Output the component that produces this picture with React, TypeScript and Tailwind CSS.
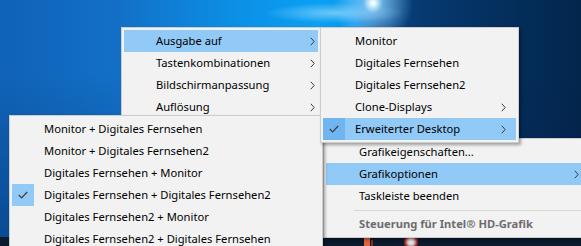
import React from "react";

type Item = {
  label: string;
  sub?: boolean;
  checked?: boolean;
  active?: boolean;
};

const font = "font-['Segoe_UI','Noto_Sans',sans-serif] text-[11.2px]";

function Chevron() {
  return (
    <svg width="5" height="9" viewBox="0 0 5 9" className="shrink-0">
      <path d="M0.8 0.8 L4.2 4.5 L0.8 8.2" fill="none" stroke="#3a3a3a" strokeWidth="1" />
    </svg>
  );
}

function Check() {
  return (
    <svg width="10" height="8" viewBox="0 0 10 8">
      <path d="M0.8 4 L3.6 6.8 L9.2 1" fill="none" stroke="#3c3c3c" strokeWidth="1.2" />
    </svg>
  );
}

function Row({ item, chevronPad }: { item: Item; chevronPad: string }) {
  return (
    <div
      className={`flex h-[22px] items-center ${item.active ? "bg-[#91c9f7]" : ""}`}
    >
      <div
        className={`flex h-[22px] w-[22px] shrink-0 items-center justify-center ${
          item.checked ? (item.active ? "bg-[#6fb6f1]" : "bg-[#91c9f7]") : ""
        }`}
      >
        {item.checked && <Check />}
      </div>
      <span className="ml-[10px] flex-1 whitespace-nowrap leading-none text-black">
        {item.label}
      </span>
      {item.sub && (
        <span className={`flex ${chevronPad}`}>
          <Chevron />
        </span>
      )}
    </div>
  );
}

const menuBox =
  "absolute border border-[#cccccc] bg-[#f2f2f2] p-[2px] shadow-[2px_2px_3px_rgba(0,0,0,0.35)]";

const menu1: Item[] = [
  { label: "Ausgabe auf", sub: true, active: true },
  { label: "Tastenkombinationen", sub: true },
  { label: "Bildschirmanpassung", sub: true },
  { label: "Auflösung", sub: true },
];

const menu2: Item[] = [
  { label: "Monitor" },
  { label: "Digitales Fernsehen" },
  { label: "Digitales Fernsehen2" },
  { label: "Clone-Displays", sub: true },
  { label: "Erweiterter Desktop", sub: true, checked: true, active: true },
];

const menu3: Item[] = [
  { label: "Monitor + Digitales Fernsehen" },
  { label: "Monitor + Digitales Fernsehen2" },
  { label: "Digitales Fernsehen + Monitor" },
  { label: "Digitales Fernsehen + Digitales Fernsehen2", checked: true },
  { label: "Digitales Fernsehen2 + Monitor" },
  { label: "Digitales Fernsehen2 + Digitales Fernsehen" },
];

export default function App() {
  return (
    <div
      className={`relative h-[246px] w-[581px] overflow-hidden ${font} bg-[radial-gradient(circle_at_373px_3px,#ffffff_0px,#d8f3ff_3px,rgba(140,210,255,0.7)_10px,rgba(60,160,240,0)_40px),radial-gradient(ellipse_70px_10px_at_335px_13px,rgba(190,235,255,0.55),rgba(190,235,255,0)),linear-gradient(to_bottom,rgba(0,0,0,0)_30%,rgba(0,25,70,0.35)_100%),linear-gradient(to_right,#0f63b8_0%,#136fc6_20%,#0b8fe5_40%,#0aa0f3_55%,#0897ec_61%,#0a4d90_65%,#063a72_72%,#04305f_85%,#03264d_100%)]`}
    >
      {/* taskbar strip */}
      <div className="absolute bottom-0 left-0 h-[9px] w-full bg-[#0b1a2d]">
        <div className="absolute left-[364px] top-[1px] h-[8px] w-[6px] bg-[#e0653a]" />
        <div className="absolute left-[371px] top-[3px] h-[6px] w-[2px] bg-[#8a2d22]" />
        <div className="absolute left-[404px] top-[1px] h-[8px] w-[14px] bg-[radial-gradient(circle,#f4f4f4_0%,#c9c9c9_40%,#b8322d_70%,rgba(0,0,0,0)_100%)]" />
      </div>

      {/* tray context menu */}
      <div className={`${menuBox} left-[323px] top-[138px] w-[280px]`}>
        <div className="flex h-[22px] items-center">
          <span className="ml-[33px] whitespace-nowrap text-black">Grafikeigenschaften...</span>
        </div>
        <div className="flex h-[22px] items-center bg-[#91c9f7]">
          <span className="ml-[33px] flex-1 whitespace-nowrap text-black">Grafikoptionen</span>
          <span className="mr-[21px] flex">
            <Chevron />
          </span>
        </div>
        <div className="flex h-[22px] items-center">
          <span className="ml-[33px] whitespace-nowrap text-black">Taskleiste beenden</span>
        </div>
        <div className="flex h-[6px] items-center pl-[28px]">
          <div className="h-px w-full bg-[#d7d7d7]" />
        </div>
        <div className="flex h-[22px] items-center">
          <span className="ml-[33px] whitespace-nowrap font-bold text-[#6d6d6d]">
            Steuerung für Intel® HD-Grafik
          </span>
        </div>
      </div>

      {/* Grafikoptionen submenu */}
      <div className={`${menuBox} left-[121px] top-[27px] h-[100px] w-[200px]`}>
        {menu1.map((it) => (
          <Row key={it.label} item={it} chevronPad="mr-[3px]" />
        ))}
      </div>

      {/* lower submenu */}
      <div className={`${menuBox} left-[9px] top-[115px] h-[140px] w-[314px]`}>
        {menu3.map((it) => (
          <Row key={it.label} item={it} chevronPad="mr-[6px]" />
        ))}
      </div>

      {/* Ausgabe auf submenu */}
      <div className={`${menuBox} left-[320px] top-[27px] w-[199px]`}>
        {menu2.map((it) => (
          <Row key={it.label} item={it} chevronPad="mr-[10px]" />
        ))}
      </div>
    </div>
  );
}
